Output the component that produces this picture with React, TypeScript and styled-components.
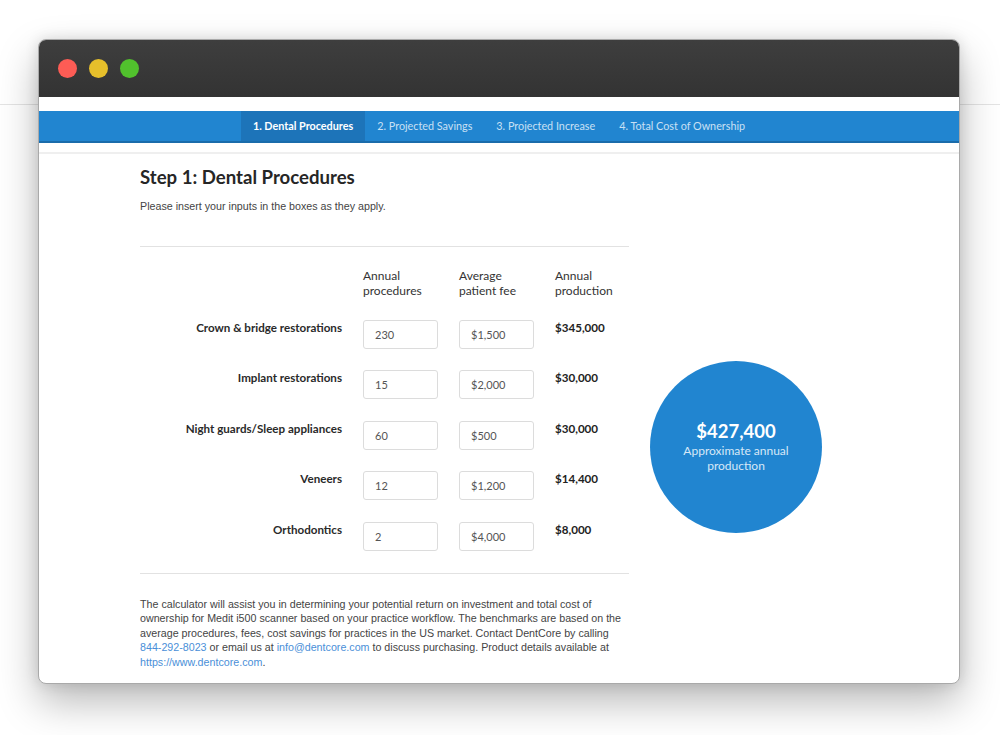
import styled, { createGlobalStyle } from 'styled-components';

const GlobalStyle = createGlobalStyle`
  html, body {
    margin: 0;
    padding: 0;
    background: #ffffff;
  }
  * { box-sizing: border-box; }
`;

const Stage = styled.div`
  width: 1000px;
  height: 735px;
  padding: 39px 0 0 38px;
  overflow: hidden;
  background: linear-gradient(to bottom, #ffffff 0, #ffffff 104px, #e4e4e4 104px, #e4e4e4 105px, #ffffff 105px);
`;

const Window = styled.div`
  width: 922px;
  height: 645px;
  border-radius: 8px;
  border: 1px solid #a9a9a9;
  overflow: hidden;
  display: flex;
  flex-direction: column;
  background: #fff;
  box-shadow: 0 18px 40px rgba(0, 0, 0, 0.28), 0 0 14px rgba(0, 0, 0, 0.12);
`;

const TitleBar = styled.div`
  height: 57px;
  flex: none;
  display: flex;
  align-items: center;
  gap: 12px;
  padding-left: 19px;
  background: linear-gradient(to bottom, #3e3e3e, #333333);
`;

const Light = styled.span<{ $color: string }>`
  width: 19px;
  height: 19px;
  border-radius: 50%;
  background: ${({ $color }) => $color};
`;

const Page = styled.div`
  flex: 1;
  padding-top: 14px;
  display: flex;
  flex-direction: column;
  overflow: hidden;
  font-family: Lato, 'Liberation Sans', sans-serif;
  color: #222;
`;

const Nav = styled.nav`
  height: 32px;
  flex: none;
  display: flex;
  justify-content: center;
  background: #2185d0;
  border-bottom: 2px solid #1a6cab;
`;

const Tab = styled.a<{ $active?: boolean }>`
  display: block;
  padding: 0 12px;
  line-height: 30px;
  font-size: 10.8px;
  font-weight: ${({ $active }) => ($active ? 700 : 400)};
  color: ${({ $active }) => ($active ? '#ffffff' : '#c9e0f4')};
  background: ${({ $active }) => ($active ? '#1d74b9' : 'transparent')};
  text-decoration: none;
`;

const TopRule = styled.div`
  height: 2px;
  flex: none;
  margin-top: 9px;
  background: #efefef;
`;

const Content = styled.main`
  padding-left: 101px;
`;

const Heading = styled.h1`
  margin: 11px 0 0;
  font-size: 18.6px;
  line-height: 24px;
  font-weight: 700;
  color: #262626;
`;

const Intro = styled.p`
  margin: 10px 0 0;
  font-family: 'Liberation Sans', Arial, sans-serif;
  font-size: 10.7px;
  line-height: 14px;
  color: #444;
`;

const Section = styled.div`
  display: flex;
  gap: 21px;
  margin-top: 33px;
`;

const Calculator = styled.div`
  width: 489px;
  border-top: 1px solid #e2e2e2;
  border-bottom: 1px solid #e2e2e2;
  padding: 21px 0 22px;
  display: grid;
  grid-template-columns: 202px 75px 75px 1fr;
  column-gap: 21px;
  row-gap: 21.5px;
  align-items: start;
`;

const ColHead = styled.div`
  font-size: 12px;
  line-height: 15px;
  color: #333;
`;

const RowLabel = styled.div`
  text-align: right;
  font-size: 11.6px;
  font-weight: 700;
  line-height: 15px;
  color: #2a2a2a;
`;

const Field = styled.input`
  width: 75px;
  height: 29px;
  border: 1px solid #dcdcdc;
  border-radius: 3px;
  padding: 0 11px;
  font-family: Lato, 'Liberation Sans', sans-serif;
  font-size: 11px;
  color: #555;
  outline: none;
  background: #fff;
`;

const Production = styled.div`
  font-size: 11.6px;
  font-weight: 700;
  line-height: 15px;
  color: #222;
`;

const Circle = styled.div`
  width: 172px;
  height: 172px;
  margin-top: 115px;
  border-radius: 50%;
  background: #2185d0;
  color: #fff;
  display: flex;
  flex-direction: column;
  align-items: center;
  justify-content: center;
  text-align: center;
  padding: 0 28px 2px;
`;

const Total = styled.div`
  font-size: 18.5px;
  font-weight: 700;
  line-height: 23px;
`;

const TotalLabel = styled.div`
  font-size: 12px;
  line-height: 15px;
  color: #d6e8f7;
`;

const Note = styled.p`
  width: 489px;
  margin: 23px 0 0;
  font-family: 'Liberation Sans', Arial, sans-serif;
  font-size: 10.7px;
  line-height: 14.5px;
  color: #444;

  a {
    color: #4a8fd8;
    text-decoration: none;
  }
`;

const tabs = ['1. Dental Procedures', '2. Projected Savings', '3. Projected Increase', '4. Total Cost of Ownership'];

const rows = [
  { label: 'Crown & bridge restorations', count: '230', fee: '$1,500', total: '$345,000' },
  { label: 'Implant restorations', count: '15', fee: '$2,000', total: '$30,000' },
  { label: 'Night guards/Sleep appliances', count: '60', fee: '$500', total: '$30,000' },
  { label: 'Veneers', count: '12', fee: '$1,200', total: '$14,400' },
  { label: 'Orthodontics', count: '2', fee: '$4,000', total: '$8,000' },
];

export default function App() {
  return (
    <Stage>
      <GlobalStyle />
      <Window>
        <TitleBar>
          <Light $color="#fd5c55" />
          <Light $color="#e6bf2b" />
          <Light $color="#51c12d" />
        </TitleBar>
        <Page>
          <Nav>
            {tabs.map((t, i) => (
              <Tab key={t} $active={i === 0}>{t}</Tab>
            ))}
          </Nav>
          <TopRule />
          <Content>
            <Heading>Step 1: Dental Procedures</Heading>
            <Intro>Please insert your inputs in the boxes as they apply.</Intro>
            <Section>
              <Calculator>
                <div />
                <ColHead>Annual<br />procedures</ColHead>
                <ColHead>Average<br />patient fee</ColHead>
                <ColHead>Annual<br />production</ColHead>
                {rows.map((r) => [
                  <RowLabel key={r.label + 'l'}>{r.label}</RowLabel>,
                  <Field key={r.label + 'c'} defaultValue={r.count} />,
                  <Field key={r.label + 'f'} defaultValue={r.fee} />,
                  <Production key={r.label + 't'}>{r.total}</Production>,
                ])}
              </Calculator>
              <Circle>
                <Total>$427,400</Total>
                <TotalLabel>Approximate annual production</TotalLabel>
              </Circle>
            </Section>
            <Note>
              The calculator will assist you in determining your potential return on investment and total cost of
              ownership for Medit i500 scanner based on your practice workflow. The benchmarks are based on the
              average procedures, fees, cost savings for practices in the US market. Contact DentCore by calling{' '}
              <a href="#">844-292-8023</a> or email us at <a href="#">info@dentcore.com</a> to discuss purchasing.
              Product details available at <a href="#">https://www.dentcore.com</a>.
            </Note>
          </Content>
        </Page>
      </Window>
    </Stage>
  );
}
